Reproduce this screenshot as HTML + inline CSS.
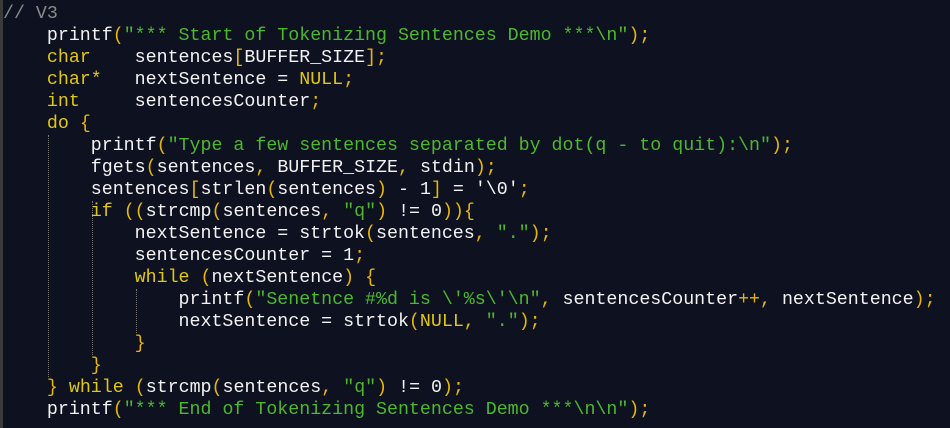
<!DOCTYPE html>
<html><head><meta charset="utf-8"><style>
html,body{margin:0;padding:0;width:950px;height:428px;overflow:hidden;background:#0e1120;}
.bar{position:absolute;left:0;top:0;width:3px;height:428px;background:#3a3a3a;}
pre{position:absolute;left:3px;top:3px;margin:0;font-family:"Liberation Mono",monospace;font-size:18.3px;line-height:22px;color:#f2f2f2;}
.c{color:#8a8a8a}.k{color:#e0c810}.s{color:#4cb82e}.p{color:#e8b800}
.g{position:absolute;width:0;border-left:1px dotted #777;}
</style></head><body>
<div class="bar"></div>
<div class="g" style="left:48px;top:135px;height:242px"></div>
<div class="g" style="left:92px;top:201px;height:154px"></div>
<div class="g" style="left:136px;top:289px;height:44px"></div>
<pre><span class="c">// V3</span>
    printf<span class="p">(</span><span class="s">"*** Start of Tokenizing Sentences Demo ***\n"</span><span class="p">);</span>
    <span class="k">char</span>    sentences<span class="p">[</span>BUFFER_SIZE<span class="p">];</span>
    <span class="k">char*</span>   nextSentence = <span class="k">NULL</span><span class="p">;</span>
    <span class="k">int</span>     sentencesCounter<span class="p">;</span>
    <span class="k">do</span> <span class="p">{</span>
        printf<span class="p">(</span><span class="s">"Type a few sentences separated by dot(q - to quit):\n"</span><span class="p">);</span>
        fgets<span class="p">(</span>sentences<span class="p">,</span> BUFFER_SIZE<span class="p">,</span> stdin<span class="p">);</span>
        sentences<span class="p">[</span>strlen<span class="p">(</span>sentences<span class="p">)</span> - 1<span class="p">]</span> = '\0'<span class="p">;</span>
        <span class="k">if</span> <span class="p">((</span>strcmp<span class="p">(</span>sentences<span class="p">,</span> <span class="s">"q"</span><span class="p">)</span> != 0<span class="p">)){</span>
            nextSentence = strtok<span class="p">(</span>sentences<span class="p">,</span> <span class="s">"."</span><span class="p">);</span>
            sentencesCounter = 1<span class="p">;</span>
            <span class="k">while</span> <span class="p">(</span>nextSentence<span class="p">)</span> <span class="p">{</span>
                printf<span class="p">(</span><span class="s">"Senetnce #%d is \'%s\'\n"</span><span class="p">,</span> sentencesCounter<span class="p">++,</span> nextSentence<span class="p">);</span>
                nextSentence = strtok<span class="p">(</span><span class="k">NULL</span><span class="p">,</span> <span class="s">"."</span><span class="p">);</span>
            <span class="p">}</span>
        <span class="p">}</span>
    <span class="p">}</span> <span class="k">while</span> <span class="p">(</span>strcmp<span class="p">(</span>sentences<span class="p">,</span> <span class="s">"q"</span><span class="p">)</span> != 0<span class="p">);</span>
    printf<span class="p">(</span><span class="s">"*** End of Tokenizing Sentences Demo ***\n\n"</span><span class="p">);</span>
</pre>
</body></html>
